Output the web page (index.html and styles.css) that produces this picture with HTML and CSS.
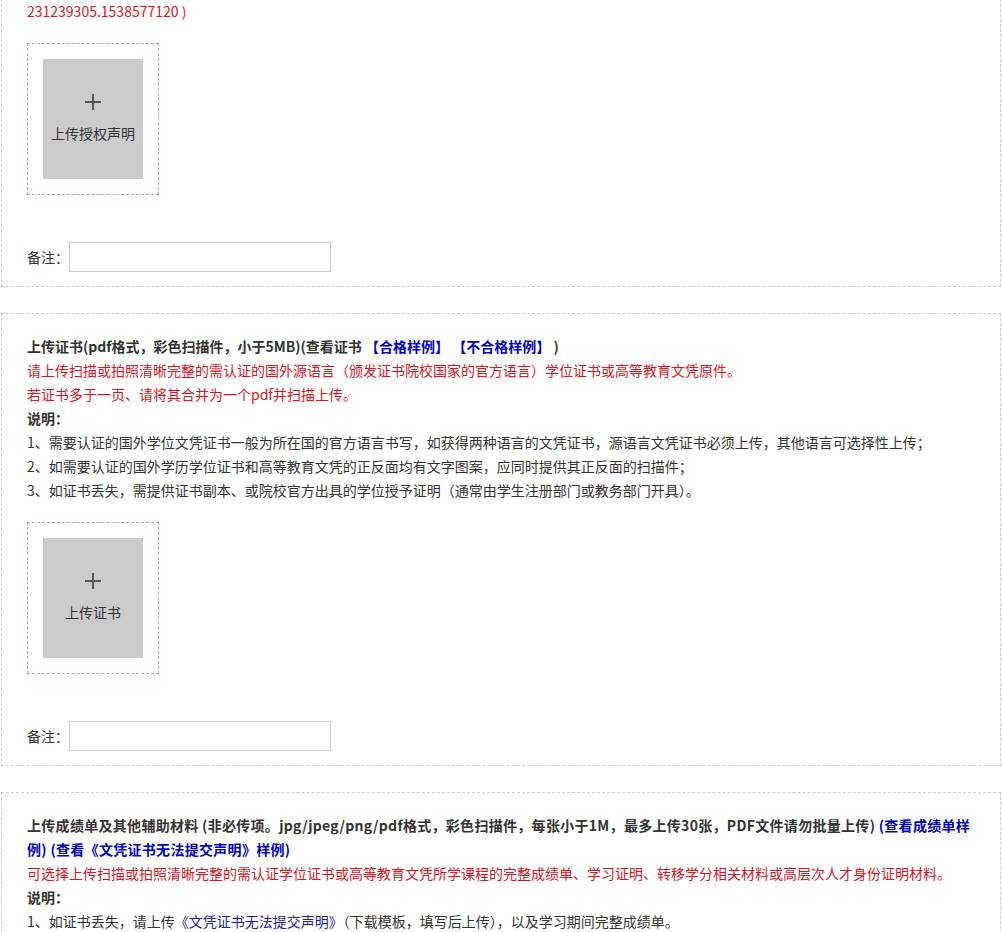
FILE: index.html
```html
<!DOCTYPE html>
<html lang="zh-CN">
<head>
<meta charset="utf-8">
<title>上传材料</title>
<link rel="stylesheet" href="styles.css">
</head>
<body>
<div class="page">
  <section class="block block-first">
    <p class="red">231239305.1538577120 )</p>
    <div class="upload">
      <div class="upload-inner">
        <span class="plus"></span>
        <span class="upload-text">上传授权声明</span>
      </div>
    </div>
    <div class="remark">
      <label class="remark-label">备注：</label>
      <input class="remark-input" type="text">
    </div>
  </section>

  <section class="block">
    <p class="title">上传证书(pdf格式，彩色扫描件，小于5MB)(查看证书 <a class="link-b">【合格样例】</a> <a class="link-b">【不合格样例】</a> )</p>
    <p class="red">请上传扫描或拍照清晰完整的需认证的国外源语言（颁发证书院校国家的官方语言）学位证书或高等教育文凭原件。</p>
    <p class="red">若证书多于一页、请将其合并为一个pdf并扫描上传。</p>
    <p class="title">说明：</p>
    <p>1、需要认证的国外学位文凭证书一般为所在国的官方语言书写，如获得两种语言的文凭证书，源语言文凭证书必须上传，其他语言可选择性上传；</p>
    <p>2、如需要认证的国外学历学位证书和高等教育文凭的正反面均有文字图案，应同时提供其正反面的扫描件；</p>
    <p>3、如证书丢失，需提供证书副本、或院校官方出具的学位授予证明（通常由学生注册部门或教务部门开具）。</p>
    <div class="upload">
      <div class="upload-inner">
        <span class="plus"></span>
        <span class="upload-text">上传证书</span>
      </div>
    </div>
    <div class="remark">
      <label class="remark-label">备注：</label>
      <input class="remark-input" type="text">
    </div>
  </section>

  <section class="block block-last">
    <p class="title title-wide">上传成绩单及其他辅助材料 (非必传项。jpg/jpeg/png/pdf格式，彩色扫描件，每张小于1M，最多上传30张，PDF文件请勿批量上传) <a class="link-b">(查看成绩单样例)</a> <a class="link-b">(查看《文凭证书无法提交声明》样例)</a></p>
    <p class="red">可选择上传扫描或拍照清晰完整的需认证学位证书或高等教育文凭所学课程的完整成绩单、学习证明、转移学分相关材料或高层次人才身份证明材料。</p>
    <p class="title">说明：</p>
    <p>1、如证书丢失，请上传<a class="link">《文凭证书无法提交声明》</a>（下载模板，填写后上传），以及学习期间完整成绩单。</p>
  </section>
</div>
</body>
</html>
```

FILE: styles.css
```css
html, body {
  margin: 0;
  padding: 0;
  background: #fff;
}

body {
  font-family: "Noto Sans CJK SC", "Microsoft YaHei", sans-serif;
  font-size: 14px;
  line-height: 24px;
  color: #333;
}

.page {
  width: 1000px;
  margin-left: 1px;
}

p {
  margin: 0;
}

.block {
  border: 1px dashed #ccc;
  padding: 20px 25px 14px;
  margin-bottom: 26px;
}

.block-first {
  border-top: none;
  padding-top: 0;
  margin-top: -1px;
}

.block-last {
  padding-bottom: 40px;
}

.red {
  color: #e0141e;
}

.title {
  font-weight: bold;
}

.title-wide {
  letter-spacing: 0.3px;
}

.link-b {
  color: #0000c8;
  font-weight: bold;
  text-decoration: none;
}

.link {
  color: #1a1ab4;
  text-decoration: none;
}

.upload {
  width: 100px;
  height: 120px;
  padding: 15px;
  border: 1px dashed #c9a0a0;
  margin-top: 20px;
}

.upload-inner {
  width: 100px;
  height: 120px;
  background: #cbcbcb;
  display: flex;
  flex-direction: column;
  align-items: center;
  justify-content: center;
  gap: 11px;
}

.plus {
  position: relative;
  display: block;
  width: 16px;
  height: 16px;
}

.plus::before,
.plus::after {
  content: "";
  position: absolute;
  background: #555;
}

.plus::before {
  left: 0;
  top: 7px;
  width: 16px;
  height: 2px;
}

.plus::after {
  left: 7px;
  top: 0;
  width: 2px;
  height: 16px;
}

.upload-text {
  display: block;
  color: #333;
  font-size: 14px;
  line-height: 24px;
}

.remark {
  display: flex;
  align-items: center;
  margin-top: 47px;
}

.remark-label {
  width: 42px;
  color: #333;
}

.remark-input {
  box-sizing: border-box;
  width: 262px;
  height: 30px;
  border: 1px solid #c8c8c8;
  margin: 0;
  padding: 0 4px;
  font: inherit;
  outline: none;
}
```
